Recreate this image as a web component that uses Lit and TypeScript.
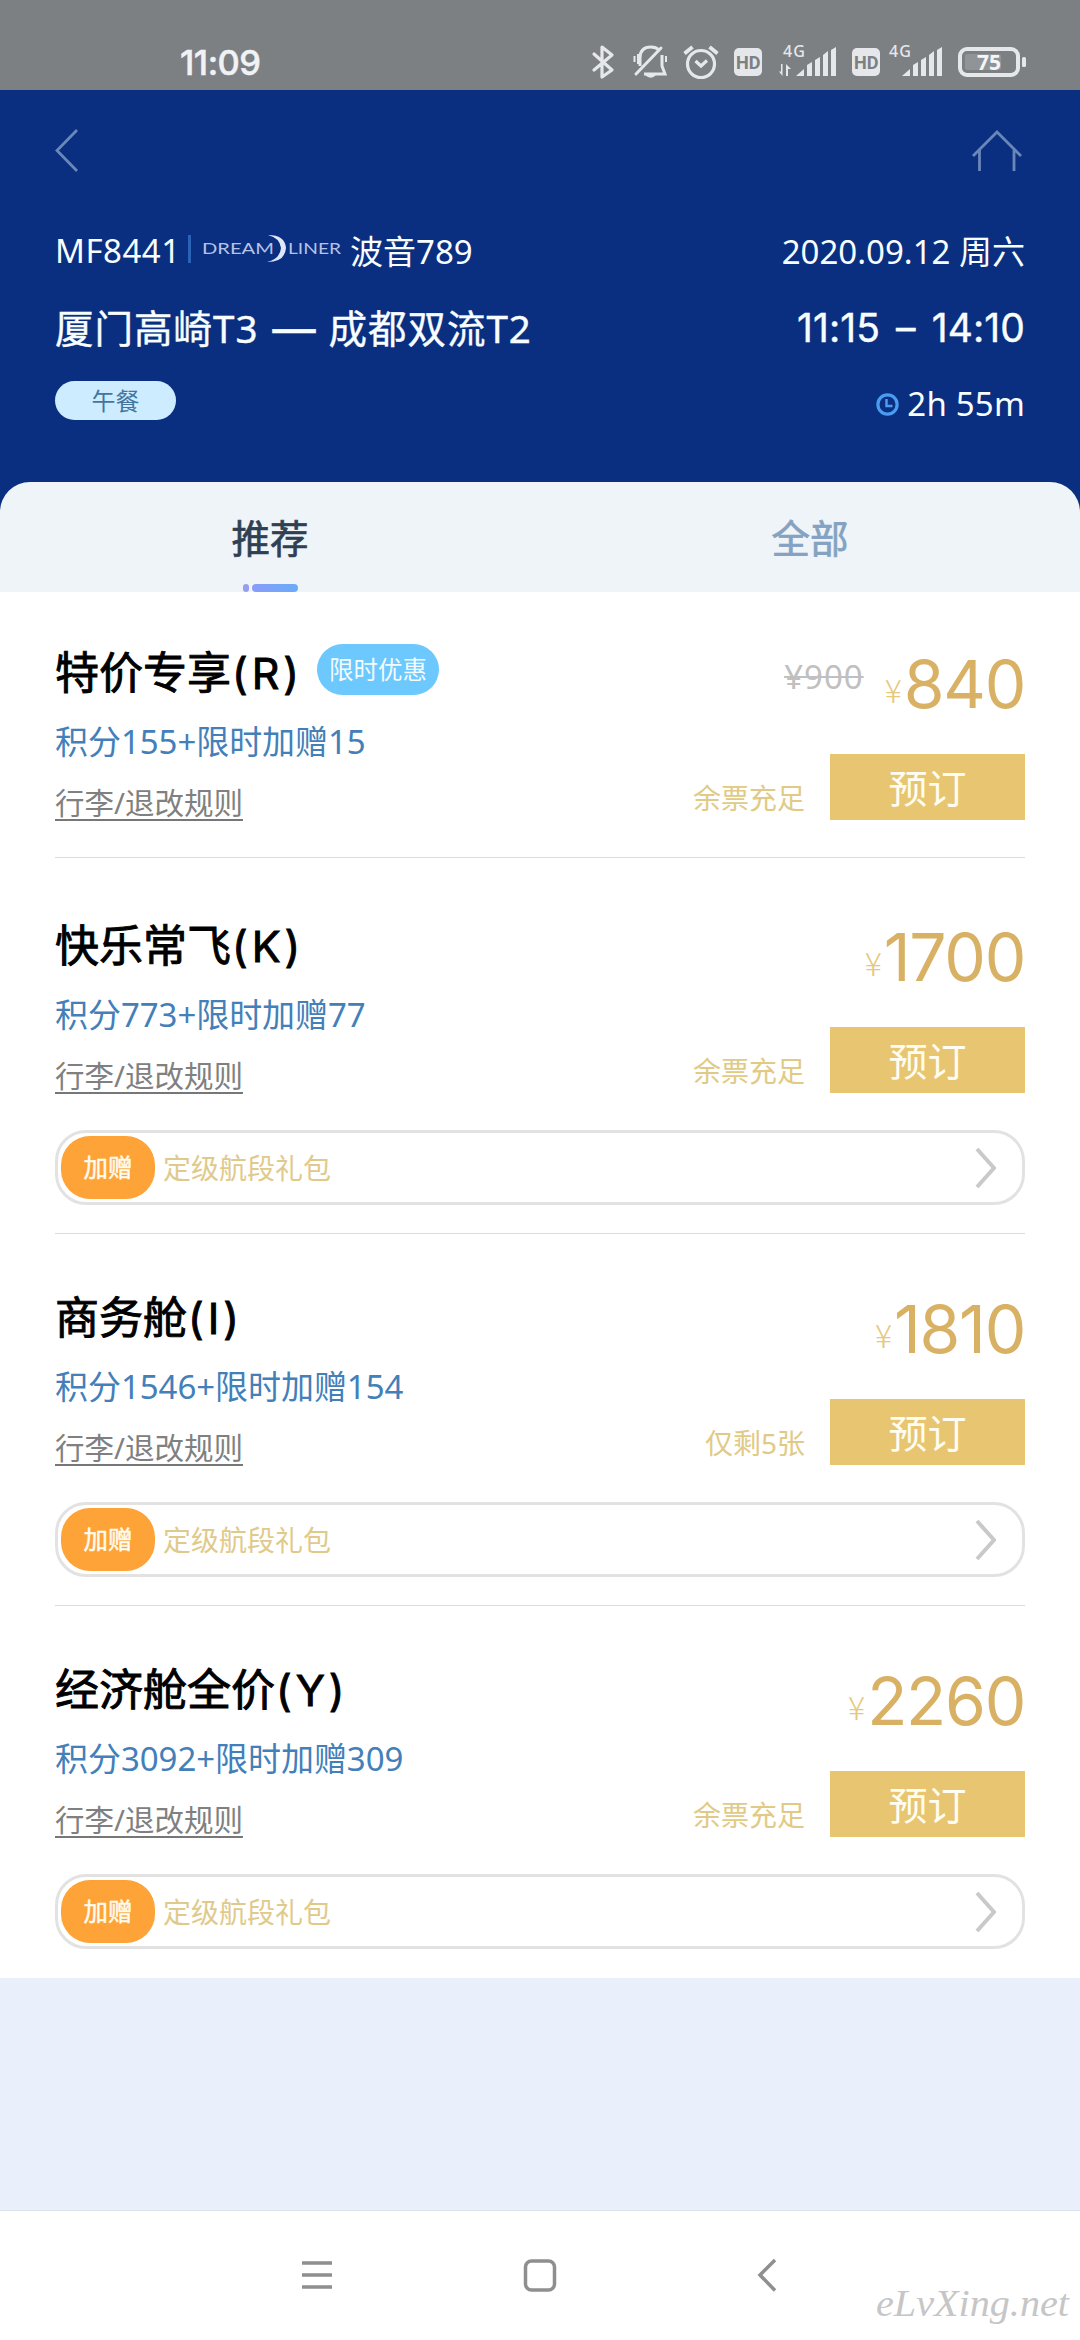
import { LitElement, html, css, svg, nothing } from "lit";
import { customElement, property } from "lit/decorators.js";

interface Fare {
  name: string;
  code: string;
  badge?: string;
  points: string;
  oldPrice?: string;
  price: string;
  stock: string;
  gift?: string;
}

const FARES: Fare[] = [
  { name: "特价专享", code: "(R)", badge: "限时优惠", points: "积分155+限时加赠15", oldPrice: "¥900", price: "840", stock: "余票充足" },
  { name: "快乐常飞", code: "(K)", points: "积分773+限时加赠77", price: "1700", stock: "余票充足", gift: "定级航段礼包" },
  { name: "商务舱", code: "(I)", points: "积分1546+限时加赠154", price: "1810", stock: "仅剩5张", gift: "定级航段礼包" },
  { name: "经济舱全价", code: "(Y)", points: "积分3092+限时加赠309", price: "2260", stock: "余票充足", gift: "定级航段礼包" },
];

const signalBars = svg`
  <path d="M0 29 L8 22 V29Z"/>
  <path d="M11 18 L16 15 V29 H11Z"/>
  <path d="M19 13 L24 10 V29 H19Z"/>
  <path d="M27 8 L32 4 V29 H27Z"/>
  <path d="M35 3 L40 0 V29 H35Z"/>`;

@customElement("status-bar")
class StatusBar extends LitElement {
  static styles = css`
    :host {
      display: block;
      height: 90px;
      box-sizing: border-box;
      background: #7c8083;
      border-bottom: 1px solid #6c80a0;
      color: #f1f2f4;
    }
    .row {
      display: flex;
      justify-content: space-between;
      align-items: center;
      height: 60px;
      padding: 32px 54px 0 180px;
    }
    .time {
      margin-top: 2px;
      font-family: Inter, "Noto Sans", sans-serif;
      font-size: 34.5px;
      font-weight: 500;
      line-height: 40px;
      letter-spacing: -0.5px;
      -webkit-text-stroke: 0.5px currentColor;
    }
    .icons { display: block; fill: #e6e7ea; color: #e6e7ea; }
    .line { fill: none; stroke: #e6e7ea; }
    .hd { font: 700 17.5px Roboto, sans-serif; fill: #7c8083; }
    .net { font: 500 16px "Noto Sans", sans-serif; }
    .pct { font: 700 21px "Noto Sans", sans-serif; fill: #f4f5f7; }
  `;
  render() {
    return html`<div class="row">
      <span class="time">11:09</span>
      <svg class="icons" width="436" height="60" viewBox="590 32 436 60">
        <path class="line" stroke-width="3.2" stroke-linejoin="round" stroke-linecap="round"
          d="M594 54 L612 70 L602 77 V47 L612 55 L594 70"/>
        <g class="line" stroke-width="3">
          <path d="M640 66 V58 Q640 47 651 47 Q656 47 659 50 M662 55 V66 L665 74 H644"/>
          <path d="M636 74 L661 48" stroke-linecap="round"/>
          <path d="M634.5 56 V62 M638 54 V64 M666 56 V62" stroke-width="2"/>
        </g>
        <path d="M645 75 H656 Q651 80.500 645 75Z"/>
        <g class="line" stroke-width="3.200">
          <circle cx="701" cy="64" r="13.500"/>
          <path d="M695.500 61 L701 66 L707 60.500"/>
          <path d="M684.500 53.500 L692.500 47 M717.500 53.500 L709.500 47" stroke-width="3.800"/>
        </g>
        <rect x="734" y="48" width="28" height="28" rx="5"/>
        <text class="hd" x="736" y="68.700" textLength="24.500" lengthAdjust="spacingAndGlyphs">HD</text>
        <text class="net" x="783" y="57" textLength="22">4G</text>
        <path d="M782.500 64 V76 L779 71.500 H781 V64Z M786 64 L791 69 H788 V76 H786Z"/>
        <g transform="translate(796 47)">${signalBars}</g>
        <rect x="852" y="48" width="28" height="28" rx="5"/>
        <text class="hd" x="854" y="68.700" textLength="24.500" lengthAdjust="spacingAndGlyphs">HD</text>
        <text class="net" x="889" y="57" textLength="22">4G</text>
        <g transform="translate(902 47)">${signalBars}</g>
        <rect class="line" x="960" y="49" width="58" height="26" rx="7" stroke-width="4"/>
        <rect x="965" y="54" width="36" height="16" rx="2" opacity=".2"/>
        <rect x="1022" y="57" width="4" height="10" rx="1.500"/>
        <text class="pct" x="977" y="70" textLength="24" lengthAdjust="spacingAndGlyphs">75</text>
      </svg>
    </div>`;
  }
}

@customElement("flight-header")
class FlightHeader extends LitElement {
  static styles = css`
    :host {
      display: block;
      height: 392px;
      box-sizing: border-box;
      padding: 36px 55px 0;
      background: #0b2f80;
      color: #f8feff;
    }
    .bar, .row { display: flex; justify-content: space-between; align-items: center; }
    .bar { height: 48px; }
    .bar svg { display: block; fill: none; stroke: #6987b8; stroke-width: 2.8; }
    .row { font-size: 33px; }
    .first { height: 50px; margin-top: 51px; }
    .second { height: 56px; margin-top: 23px; font-size: 38.5px; }
    .second .left { letter-spacing: 1px; -webkit-text-stroke: 0.4px currentColor; }
    .second .right {
      margin-top: 3px;
      font-family: Inter, "Noto Sans", sans-serif;
      font-size: 39px;
      word-spacing: 5px;
      letter-spacing: 0.1px;
      -webkit-text-stroke: 0.4px currentColor;
    }
    .dash { margin: 0 11px 0 12px; font-size: 47px; line-height: 40px; letter-spacing: 0; }
    .third { height: 44px; margin-top: 27px; }
    .left, .right { display: flex; align-items: center; white-space: nowrap; }
    .no { width: 133px; letter-spacing: 0.5px; }
    .sep { width: 3px; height: 28px; margin: -3px 11px 0 0; background: #2a63b6; }
    .logo { display: block; margin: -3px 8px 0 0; }
    .logo text { font: 15.500px Lato, sans-serif; fill: #b5c3e6; }
    .meal {
      width: 121px;
      height: 39px;
      border-radius: 20px;
      background: #cdecff;
      color: #44759f;
      font-size: 24px;
      line-height: 40px;
      text-align: center;
    }
    .third .left { margin-top: -5px; }
    .third .right { gap: 8px; letter-spacing: 0.2px; }
    .clock { display: block; margin-top: 2px; fill: none; stroke: #4a9cf0; stroke-width: 3.2; }
  `;
  render() {
    return html`
      <div class="bar">
        <svg width="26" height="48" viewBox="55 126 26 48"><path d="M77 130 L57 150.500 L77 171"/></svg>
        <svg width="54" height="48" viewBox="971 126 54 48">
          <path d="M973 156 L997 132 L1021 156 M979.500 150 V171 M1014 150 V171"/>
        </svg>
      </div>
      <div class="row first">
        <div class="left">
          <span class="no">MF8441</span>
          <i class="sep"></i>
          <svg class="logo" width="140" height="28" viewBox="203 234 140 28">
            <text x="203" y="253" textLength="72" lengthAdjust="spacingAndGlyphs">DREAM</text>
            <text x="289" y="253" textLength="53" lengthAdjust="spacingAndGlyphs">LINER</text>
            <path d="M269 234 Q286 234 287 247 Q286 261 268 261 Q281 258 282 247 Q281 237 269 234Z" fill="#dfe6f8"/>
          </svg>
          <span>波音789</span>
        </div>
        <div class="right">2020.09.12 周六</div>
      </div>
      <div class="row second">
        <div class="left"><span>厦门高崎T3</span><span class="dash">—</span><span>成都双流T2</span></div>
        <div class="right">11:15 – 14:10</div>
      </div>
      <div class="row third">
        <div class="left"><span class="meal">午餐</span></div>
        <div class="right">
          <svg class="clock" width="23" height="23" viewBox="0 0 23 23">
            <circle cx="11.500" cy="11.500" r="9.600"/><path d="M10.500 6 V13 H16.500" stroke-width="2.500"/>
          </svg>
          <span>2h 55m</span>
        </div>
      </div>`;
  }
}

@customElement("fare-card")
class FareCard extends LitElement {
  @property({ attribute: false }) fare!: Fare;
  @property({ type: Boolean }) first = false;
  @property({ type: Boolean }) last = false;
  static styles = css`
    :host { display: block; padding: 0 55px; background: #fff; }
    .card { padding-top: 54px; border-bottom: 1px solid #d8dde1; }
    .main { display: flex; justify-content: space-between; height: 177px; white-space: nowrap; }
    .head { display: flex; align-items: center; height: 60px; }
    .name { margin-top: -2px; font-size: 44px; line-height: 60px; color: #000; -webkit-text-stroke: 0.9px currentColor; }
    .code { margin-left: 1px; font-family: Inter, "Noto Sans", sans-serif; font-size: 43px; letter-spacing: 4px; }
    .badge {
      width: 122px;
      height: 51px;
      margin: -7px 0 0;
      border-radius: 26px;
      background: #6cc8fd;
      color: #f2fbff;
      font-size: 24.5px;
      line-height: 51px;
      text-align: center;
    }
    .discounted .name { width: 262px; }
    .points { margin-top: 17px; font-size: 33px; line-height: 44px; letter-spacing: -0.05px; color: #4380b9; }
    .rules {
      width: max-content;
      margin-top: 22px;
      border-bottom: 2px solid #777;
      font-size: 29.500px;
      line-height: 33px;
      color: #808080;
    }
    .side { display: flex; flex-direction: column; align-items: flex-end; }
    .amount { display: flex; box-sizing: border-box; height: 113px; padding-top: 6px; }
    .old { margin: 8px 21px 0 0; font-size: 33px; line-height: 40px; letter-spacing: 1px; color: #c0c0c0; text-decoration: line-through 1.500px; }
    .yen { margin: 24px 2px 0 0; font-size: 32px; line-height: 32px; color: #e6c87c; font-family: "Noto Sans CJK SC", sans-serif; font-weight: 300; }
    .price { font-family: Inter, "Noto Sans", sans-serif; font-size: 66px; line-height: 70px; color: #d8b164; letter-spacing: -1.3px; }
    .buy { display: flex; gap: 25px; }
    .stock { margin-top: 25px; font-size: 28px; line-height: 38px; color: #e1ca85; }
    .book { width: 195px; height: 66px; background: #e8c671; color: #fffdf2; font-size: 39px; line-height: 67px; text-align: center; }
    .gift {
      display: flex;
      align-items: center;
      box-sizing: border-box;
      height: 75px;
      margin: 37px 0 28px;
      padding: 0 26px 0 3px;
      border: 3px solid #e2e2e2;
      border-radius: 31px;
    }
    .tag {
      width: 94px;
      height: 63px;
      border-radius: 29px;
      background: #fea337;
      color: #fffbee;
      font-size: 24.500px;
      line-height: 64px;
      text-align: center;
      -webkit-text-stroke: 0.5px currentColor;
    }
    .text { flex: 1; padding-left: 8px; font-size: 28px; line-height: 40px; color: #dfca8c; }
    .go { display: block; fill: none; stroke: #c9c9c9; stroke-width: 4; }
    .first { padding-top: 51px; }
    .plain { padding-bottom: 37px; margin-bottom: 4px; }
    .last { border-bottom-color: transparent; }
  `;
  render() {
    const f = this.fare;
    return html`<div class="card ${this.first ? "first" : ""} ${f.gift ? "" : "plain"} ${this.last ? "last" : ""}">
      <div class="main">
        <div>
          <div class="head ${f.badge ? "discounted" : ""}">
            <span class="name">${f.name}<span class="code">${f.code}</span></span>
            ${f.badge ? html`<span class="badge">${f.badge}</span>` : nothing}
          </div>
          <div class="points">${f.points}</div>
          <div class="rules">行李/退改规则</div>
        </div>
        <div class="side">
          <div class="amount">
            ${f.oldPrice ? html`<span class="old">${f.oldPrice}</span>` : nothing}
            <span class="yen">¥</span><span class="price">${f.price}</span>
          </div>
          <div class="buy"><span class="stock">${f.stock}</span><span class="book">预订</span></div>
        </div>
      </div>
      ${f.gift
        ? html`<div class="gift">
            <span class="tag">加赠</span><span class="text">${f.gift}</span>
            <svg class="go" width="22" height="42" viewBox="0 0 22 42"><path d="M3 2 L20 21 L3 40"/></svg>
          </div>`
        : nothing}
    </div>`;
  }
}

@customElement("app-root")
class AppRoot extends LitElement {
  static styles = css`
    :host {
      display: flex;
      flex-direction: column;
      width: 1080px;
      height: 2340px;
      overflow: hidden;
      background: #e9f0fc;
      font-family: "Noto Sans", "Noto Sans CJK SC", sans-serif;
    }
    .tabwrap { background: #0b2f80; }
    .tabs { display: flex; height: 110px; border-radius: 30px 30px 0 0; background: #eef4f7; }
    .tab {
      flex: 1;
      display: flex;
      flex-direction: column;
      justify-content: space-between;
      align-items: center;
      padding-top: 28px;
      font-size: 38.5px;
      line-height: 56px;
      color: #84a2c2;
      -webkit-text-stroke: 0.7px currentColor;
    }
    .active { color: #2f3f54; }
    .mark { display: flex; gap: 3px; }
    .dot { width: 6px; height: 8px; border-radius: 3px; background: #989df0; }
    .dash { width: 46px; height: 8px; border-radius: 4px; background: linear-gradient(90deg, #8a9bfa, #68acf8); }
    .nav {
      display: block;
      margin-top: auto;
      border-top: 1px solid #dbe3ea;
      background: #fff;
      fill: none;
      stroke: #8f8f8f;
      stroke-width: 3.500;
    }
    .mark-text { font: italic 37px "Liberation Serif", serif; fill: #c6c6c6; stroke: none; }
  `;
  render() {
    return html`
      <status-bar></status-bar>
      <flight-header></flight-header>
      <div class="tabwrap">
        <div class="tabs">
          <div class="tab active"><span>推荐</span><span class="mark"><i class="dot"></i><i class="dash"></i></span></div>
          <div class="tab"><span>全部</span></div>
        </div>
      </div>
      ${FARES.map(
        (f, i) => html`<fare-card .fare=${f} ?first=${i === 0} ?last=${i === FARES.length - 1}></fare-card>`
      )}
      <svg class="nav" width="1080" height="129" viewBox="0 2211 1080 129">
        <path d="M302 2263 H332 M302 2275 H332 M302 2287 H332"/>
        <rect x="525.500" y="2261" width="29" height="29" rx="6"/>
        <path d="M775 2260 L760 2275 L775 2290.500"/>
        <text class="mark-text" x="876" y="2316" textLength="193" lengthAdjust="spacingAndGlyphs">eLvXing.net</text>
      </svg>`;
  }
}
